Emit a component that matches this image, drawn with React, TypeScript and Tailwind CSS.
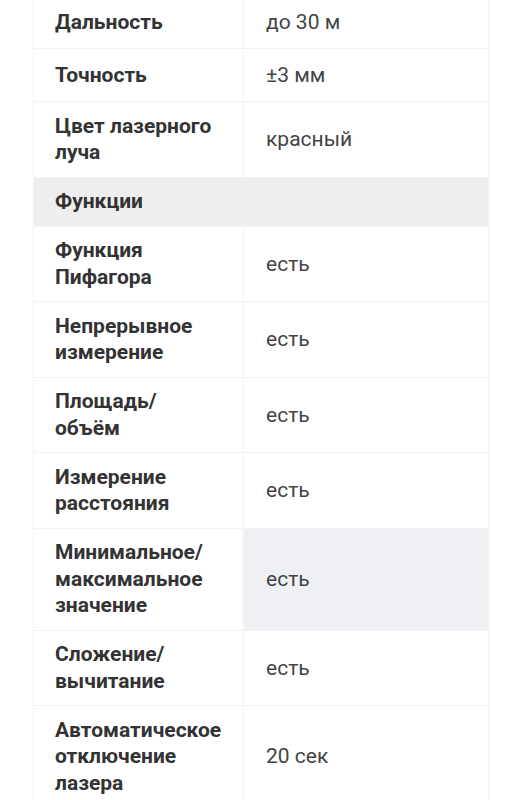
import React from 'react';

type Row = { label: string; value?: string; section?: boolean; highlight?: boolean };

const rows: Row[] = [
  { label: 'Дальность', value: 'до 30 м' },
  { label: 'Точность', value: '±3 мм' },
  { label: 'Цвет лазерного луча', value: 'красный' },
  { label: 'Функции', section: true },
  { label: 'Функция Пифагора', value: 'есть' },
  { label: 'Непрерывное измерение', value: 'есть' },
  { label: 'Площадь/ объём', value: 'есть' },
  { label: 'Измерение расстояния', value: 'есть' },
  { label: 'Минимальное/ максимальное значение', value: 'есть', highlight: true },
  { label: 'Сложение/ вычитание', value: 'есть' },
  { label: 'Автоматическое отключение лазера', value: '20 сек' },
];

const App = () => {
  return (
    <div className="min-h-screen bg-white overflow-hidden font-['Roboto',sans-serif]">
      <table className="ml-[33px] -mt-[5px] w-[456px] border-collapse table-fixed">
        <colgroup>
          <col className="w-[210px]" />
          <col />
        </colgroup>
        <tbody>
          {rows.map((row) =>
            row.section ? (
              <tr key={row.label} className="bg-[#eeeeee]">
                <td className="border border-[#f2f2f2] pl-[21px] py-[10.75px] text-[21px] leading-[26.5px] font-bold text-[#333]">
                  {row.label}
                </td>
                <td className="border border-[#f2f2f2]" />
              </tr>
            ) : (
              <tr key={row.label} className="h-[53px]">
                <td className="border border-[#f2f2f2] pl-[21px] pr-[19px] py-[10.75px] text-[21px] leading-[26.5px] font-bold text-[#333] align-middle">
                  {row.label}
                </td>
                <td
                  className={
                    row.highlight
                      ? 'border border-[#f2f2f2] bg-[#eef0f3] pl-[22px] py-[10.75px] text-[21px] leading-[26.5px] text-[#444] align-middle'
                      : 'border border-[#f2f2f2] pl-[22px] py-[10.75px] text-[21px] leading-[26.5px] text-[#444] align-middle'
                  }
                >
                  {row.value}
                </td>
              </tr>
            )
          )}
        </tbody>
      </table>
    </div>
  );
};

export default App;
